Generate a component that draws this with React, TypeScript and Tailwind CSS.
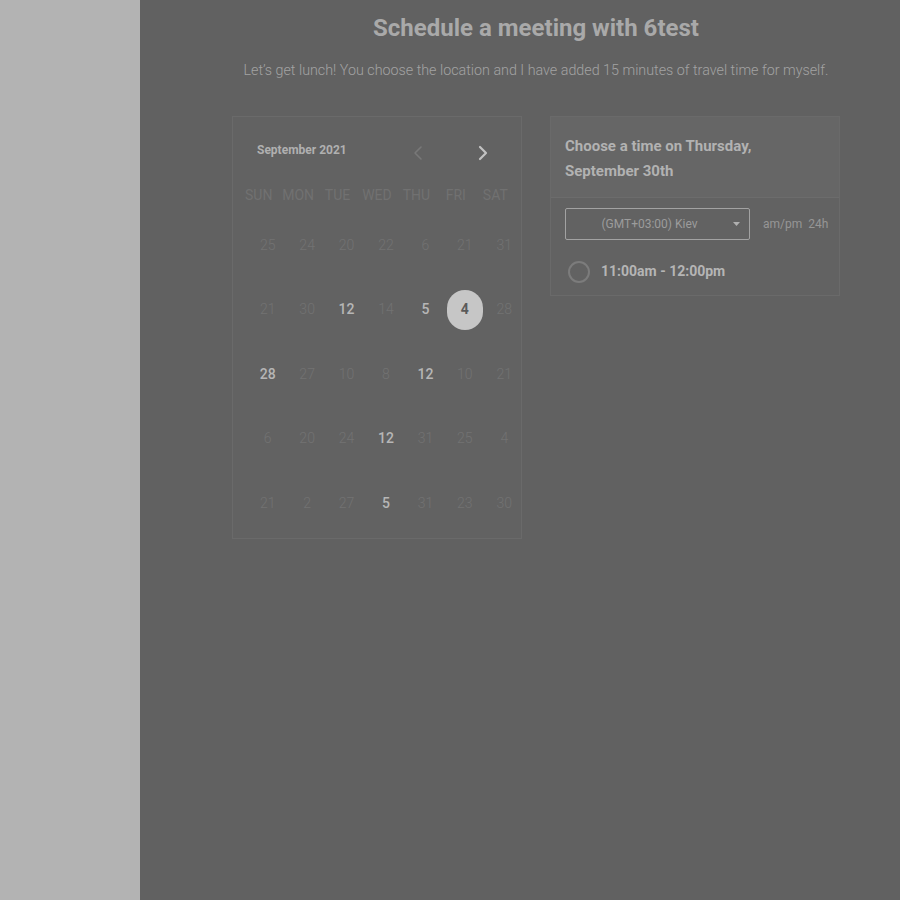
import React from 'react';
import { ChevronLeft, ChevronRight } from 'lucide-react';

const weekdays = ['SUN', 'MON', 'TUE', 'WED', 'THU', 'FRI', 'SAT'];

// [label, bold]
const weeks: [string, boolean][][] = [
  [['25', false], ['24', false], ['20', false], ['22', false], ['6', false], ['21', false], ['31', false]],
  [['21', false], ['30', false], ['12', true], ['14', false], ['5', true], ['4', true], ['28', false]],
  [['28', true], ['27', false], ['10', false], ['8', false], ['12', true], ['10', false], ['21', false]],
  [['6', false], ['20', false], ['24', false], ['12', true], ['31', false], ['25', false], ['4', false]],
  [['21', false], ['2', false], ['27', false], ['5', true], ['31', false], ['23', false], ['30', false]],
];

const Calendar = () => {
  return (
    <div className="w-[290px] h-[423px] border border-[#6a6a6a] bg-[#626262] pt-[23px] overflow-hidden">
      <div className="flex items-center h-5 pl-[24px] pr-[26px]">
        <span className="text-[12px] font-bold text-[#b0b0b0]">September 2021</span>
        <div className="ml-auto flex items-center gap-[41px] mt-[6px]">
          <ChevronLeft size={24} strokeWidth={1.6} className="text-[#787878]" />
          <ChevronRight size={24} strokeWidth={2.2} className="text-[#c2c2c2]" />
        </div>
      </div>
      <div className="grid grid-cols-7 w-[276px] ml-[6px] mt-[25px] h-5">
        {weekdays.map((d) => (
          <div key={d} className="text-center text-[14px] leading-5 text-[#717171]">
            {d}
          </div>
        ))}
      </div>
      <div className="grid grid-cols-7 w-[276px] ml-[15px] mt-[8px]">
        {weeks.map((week, wi) =>
          week.map(([label, bold], di) => {
            const selected = wi === 1 && di === 5;
            return (
              <div key={`${wi}-${di}`} className="h-[64.5px] flex items-center justify-center">
                {selected ? (
                  <span className="w-9 h-10 rounded-full bg-[#c6c6c6] flex items-center justify-center text-[14px] font-bold text-[#5a5a5a]">
                    {label}
                  </span>
                ) : (
                  <span
                    className={
                      bold
                        ? 'text-[14px] font-medium text-[#b6b6b6]'
                        : 'text-[14px] font-light text-[#727272]'
                    }
                  >
                    {label}
                  </span>
                )}
              </div>
            );
          })
        )}
      </div>
    </div>
  );
};

const TimePanel = () => {
  return (
    <div className="w-[290px] border border-[#6a6a6a] bg-[#626262] self-start">
      <div className="bg-[#666666] border-b border-[#6c6c6c] px-[14px] pt-[17px] h-[81px]">
        <h2 className="text-[15px] leading-[25px] font-bold text-[#b2b2b2]">
          Choose a time on Thursday,
          <br />
          September 30th
        </h2>
      </div>
      <div className="pl-[14px] pt-[10px] pb-[13px]">
        <div className="flex items-center">
          <div className="relative shrink-0 w-[185px] h-8 border border-[#a2a2a2] rounded-[2px] flex items-center justify-center pr-[16px]">
            <span className="text-[12px] text-[#9c9c9c]">(GMT+03:00) Kiev</span>
            <svg
              className="absolute right-[9px] top-[13px]"
              width="7"
              height="4"
              viewBox="0 0 7 4"
            >
              <path d="M0 0h7L3.5 4z" fill="#b0b0b0" />
            </svg>
          </div>
          <span className="ml-[13px] text-[12px] text-[#969696] whitespace-pre">am/pm  24h</span>
        </div>
        <div className="flex items-center mt-5 h-[22px]">
          <span className="ml-[3px] mt-[2px] w-[22px] h-[22px] rounded-full border-2 border-[#7c7c7c]" />
          <span className="ml-[11px] mt-[1px] text-[14px] font-bold text-[#b5b5b5]">11:00am - 12:00pm</span>
        </div>
      </div>
    </div>
  );
};

export default function App() {
  return (
    <div className="flex w-full h-[900px] font-['Roboto',sans-serif]">
      <div className="w-[140px] shrink-0 bg-[#b3b3b3]" />
      <main className="flex-1 bg-[#616161] pl-8 flex flex-col items-center">
        <h1 className="pt-3 text-[24px] leading-8 font-bold text-[#a9a9a9]">
          Schedule a meeting with 6test
        </h1>
        <p className="mt-4 text-[14.3px] leading-5 font-light text-[#a3a3a3]">
          Let’s get lunch! You choose the location and I have added 15 minutes of travel time for myself.
        </p>
        <div className="mt-9 flex gap-7">
          <Calendar />
          <TimePanel />
        </div>
      </main>
    </div>
  );
}
